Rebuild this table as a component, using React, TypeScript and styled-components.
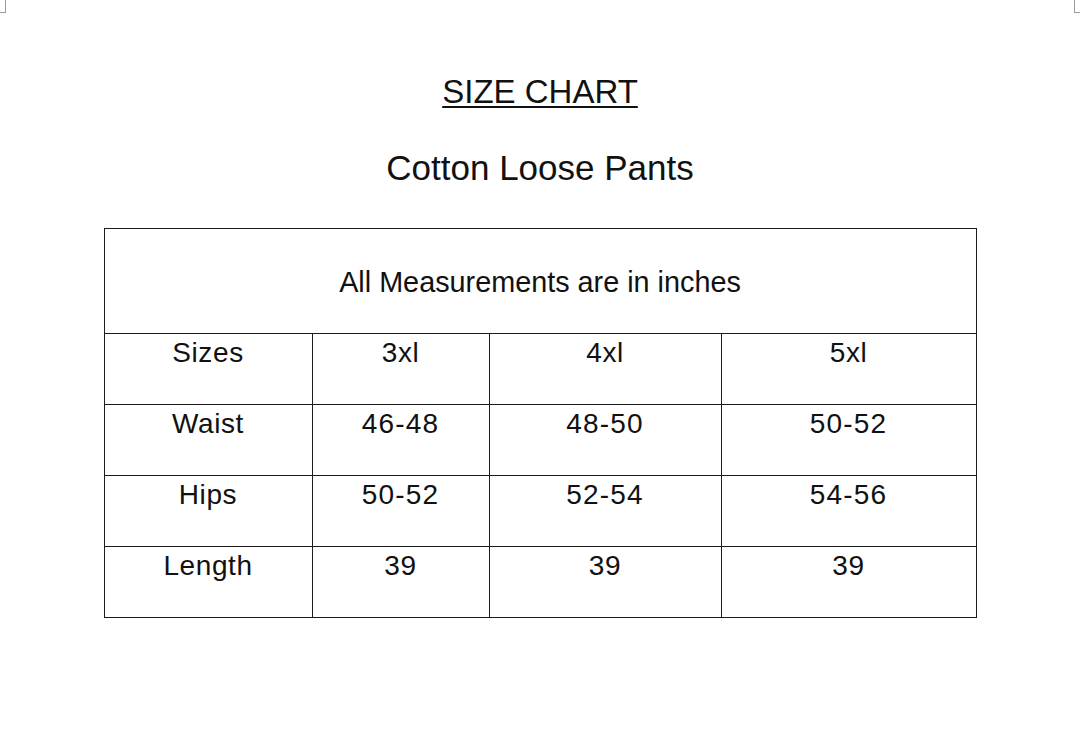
import styled, { createGlobalStyle } from "styled-components";

const GlobalStyle = createGlobalStyle`
  html, body {
    margin: 0;
    padding: 0;
    background: #ffffff;
  }
  body {
    font-family: "Liberation Sans", Arial, sans-serif;
    color: #111111;
  }
`;

const Page = styled.div`
  position: relative;
  width: 1080px;
  height: 747px;
  display: flex;
  flex-direction: column;
  align-items: center;
  box-sizing: border-box;
  padding-top: 74px;
  overflow: hidden;
`;

const CornerMark = styled.div<{ $side: "left" | "right" }>`
  position: absolute;
  top: 0;
  ${(p) => (p.$side === "left" ? "left: 0;" : "right: 0;")}
  width: 5px;
  height: 12px;
  border-bottom: 1px solid #9a9a9a;
  ${(p) =>
    p.$side === "left"
      ? "border-right: 1px solid #9a9a9a;"
      : "border-left: 1px solid #9a9a9a;"}
`;

const Title = styled.h1`
  margin: 0;
  font-size: 33px;
  line-height: 36px;
  font-weight: 400;
  text-decoration: underline;
  text-decoration-thickness: 2px;
  text-underline-offset: 3px;
`;

const Subtitle = styled.h2`
  margin: 38px 0 0;
  font-size: 35px;
  line-height: 40px;
  font-weight: 400;
`;

const Chart = styled.table`
  margin-top: 40px;
  width: 872px;
  border-collapse: collapse;
  table-layout: fixed;
  font-size: 28px;
`;

const HeadCell = styled.th`
  height: 102px;
  border: 1px solid #1c1c1c;
  font-weight: 400;
  font-size: 28.8px;
  text-align: center;
  vertical-align: middle;
  padding: 2px 0 0;
`;

const Cell = styled.td<{ $numeric?: boolean }>`
  height: 71px;
  border: 1px solid #1c1c1c;
  text-align: center;
  vertical-align: top;
  padding: 3px 0 0;
  box-sizing: border-box;
  letter-spacing: ${(p) => (p.$numeric ? "1.2px" : "0.6px")};
`;

const widths = [208, 177, 232, 255];

const rows = [
  ["Sizes", "3xl", "4xl", "5xl"],
  ["Waist", "46-48", "48-50", "50-52"],
  ["Hips", "50-52", "52-54", "54-56"],
  ["Length", "39", "39", "39"],
];

export default function App(): JSX.Element {
  return (
    <>
      <GlobalStyle />
      <Page>
        <CornerMark $side="left" />
        <CornerMark $side="right" />
        <Title>SIZE CHART</Title>
        <Subtitle>Cotton Loose Pants</Subtitle>
        <Chart>
          <colgroup>
            {widths.map((w, i) => (
              <col key={i} style={{ width: w }} />
            ))}
          </colgroup>
          <thead>
            <tr>
              <HeadCell colSpan={4}>All Measurements are in inches</HeadCell>
            </tr>
          </thead>
          <tbody>
            {rows.map((row) => (
              <tr key={row[0]}>
                {row.map((v, i) => (
                  <Cell key={i} $numeric={i > 0 && /\d-\d/.test(v)}>
                    {v}
                  </Cell>
                ))}
              </tr>
            ))}
          </tbody>
        </Chart>
      </Page>
    </>
  );
}
